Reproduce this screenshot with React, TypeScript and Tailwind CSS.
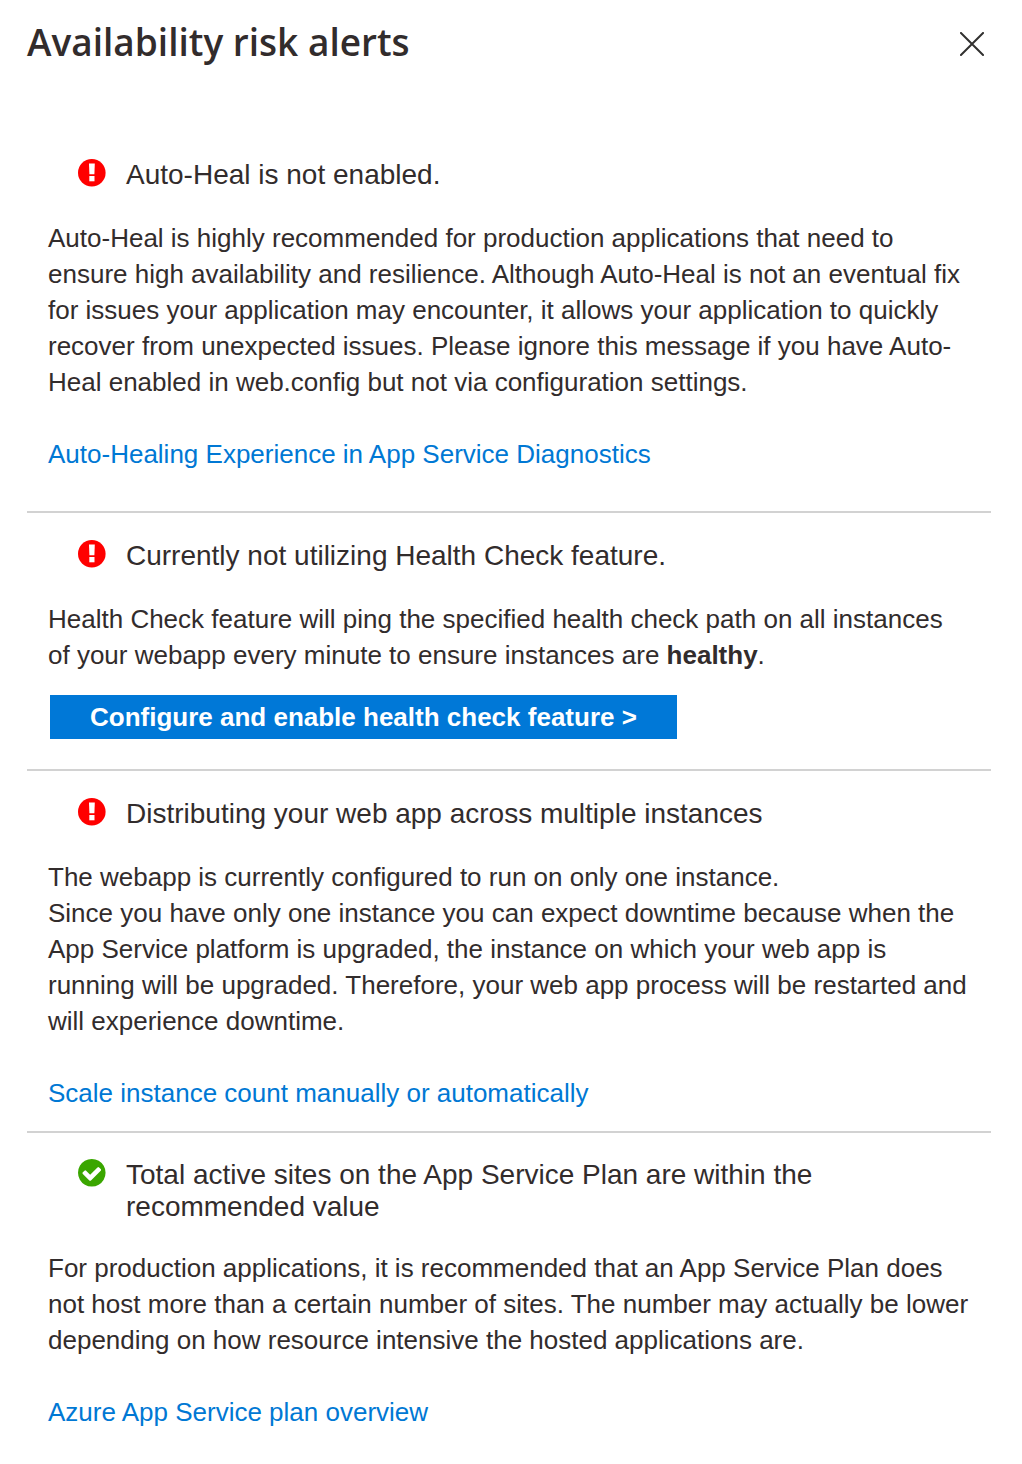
import React from "react";

type Status = "error" | "ok";

function StatusIcon({ status }: { status: Status }) {
  return status === "error" ? (
    <svg viewBox="0 0 28 28" className="size-7 shrink-0" role="img" aria-label="Critical">
      <circle cx="13.8" cy="13.8" r="13.8" fill="#ff0000" />
      <path d="M11 4.400h5.800l-.4 10.800h-5z" fill="#fff" />
      <path d="M11.300 17h5.200v5.300h-5.200z" fill="#fff" />
    </svg>
  ) : (
    <svg viewBox="0 0 1560 1560" className="size-7 shrink-0 fill-[#3aa600]" role="img" aria-label="Healthy">
      <path d="M1284 606q0-28-18-46l-91-90q-19-19-45-19t-45 19l-408 407-226-226q-19-19-45-19t-45 19l-91 90q-18 18-18 46 0 27 18 45l362 362q19 19 45 19 27 0 46-19l543-543q18-18 18-45zm252 162q0 209-103 385.500t-279.500 279.500-385.500 103-385.500-103-279.500-279.500-103-385.500 103-385.500 279.500-279.500 385.500-103 385.500 103 279.500 279.500 103 385.500z" />
    </svg>
  );
}

function Alert({
  status,
  title,
  className,
  bodyClassName = "mt-[29px] pr-4",
  children,
}: {
  status: Status;
  title: string;
  className: string;
  bodyClassName?: string;
  children: React.ReactNode;
}) {
  return (
    <section className={`border-[#d2d2d2] pl-[21px] ${className}`}>
      <div className="flex gap-5 pl-[30px] pr-24">
        <StatusIcon status={status} />
        <h2 className="text-[28px] leading-8">{title}</h2>
      </div>
      <div className={`text-[26px] leading-9 ${bodyClassName}`}>{children}</div>
    </section>
  );
}

const link = "text-[#0078d4] hover:underline";

export default function App() {
  return (
    <main className="min-h-screen bg-white pb-8 pl-[27px] pr-[31px] font-['Liberation_Sans',Arial,sans-serif] text-[#322c2c]">
      <header className="flex items-start justify-between pr-[7px] pt-4">
        <h1 className="font-['Open_Sans',sans-serif] text-[37px] font-semibold leading-[52px]">Availability risk alerts</h1>
        <button type="button" aria-label="Close" className="mt-4">
          <svg viewBox="0 0 24 24" className="size-6" fill="none" stroke="#323130" strokeWidth="2">
            <path d="M.3.3l23.400 23.400M23.700.3L.3 23.700" />
          </svg>
        </button>
      </header>
      <Alert status="error" title="Auto-Heal is not enabled." className="border-b-2 pb-[39px] pt-[91px]">
        <p>
          Auto-Heal is highly recommended for production applications that need to ensure high availability and
          resilience. Although Auto-Heal is not an eventual fix for issues your application may encounter, it allows
          your application to quickly recover from unexpected issues. Please ignore this message if you have Auto-Heal
          enabled in web.config but not via configuration settings.
        </p>
        <p className="mt-9">
          <a href="#auto-heal" className={link}>Auto-Healing Experience in App Service Diagnostics</a>
        </p>
      </Alert>
      <Alert
        status="error"
        title="Currently not utilizing Health Check feature."
        className="border-b-2 pb-[30px] pt-[27px]"
        bodyClassName="mt-[29px] pr-8"
      >
        <p>
          Health Check feature will ping the specified health check path on all instances of your webapp every minute to
          ensure instances are <b>healthy</b>.
        </p>
        <button type="button" className="ml-0.5 mt-[22px] block h-11 bg-[#0078d7] px-10 font-bold text-white">
          Configure and enable health check feature &gt;
        </button>
      </Alert>
      <Alert status="error" title="Distributing your web app across multiple instances" className="border-b-2 pb-5 pt-[27px]">
        <p>
          The webapp is currently configured to run on only one instance.
          <br />
          Since you have only one instance you can expect downtime because when the App Service platform is upgraded,
          the instance on which your web app is running will be upgraded. Therefore, your web app process will be
          restarted and will experience downtime.
        </p>
        <p className="mt-9">
          <a href="#scale" className={link}>Scale instance count manually or automatically</a>
        </p>
      </Alert>
      <Alert
        status="ok"
        title="Total active sites on the App Service Plan are within the recommended value"
        className="pt-[26px]"
        bodyClassName="mt-[27px] pr-4"
      >
        <p>
          For production applications, it is recommended that an App Service Plan does not host more than a certain
          number of sites. The number may actually be lower depending on how resource intensive the hosted applications
          are.
        </p>
        <p className="mt-9">
          <a href="#plan" className={link}>Azure App Service plan overview</a>
        </p>
      </Alert>
    </main>
  );
}
